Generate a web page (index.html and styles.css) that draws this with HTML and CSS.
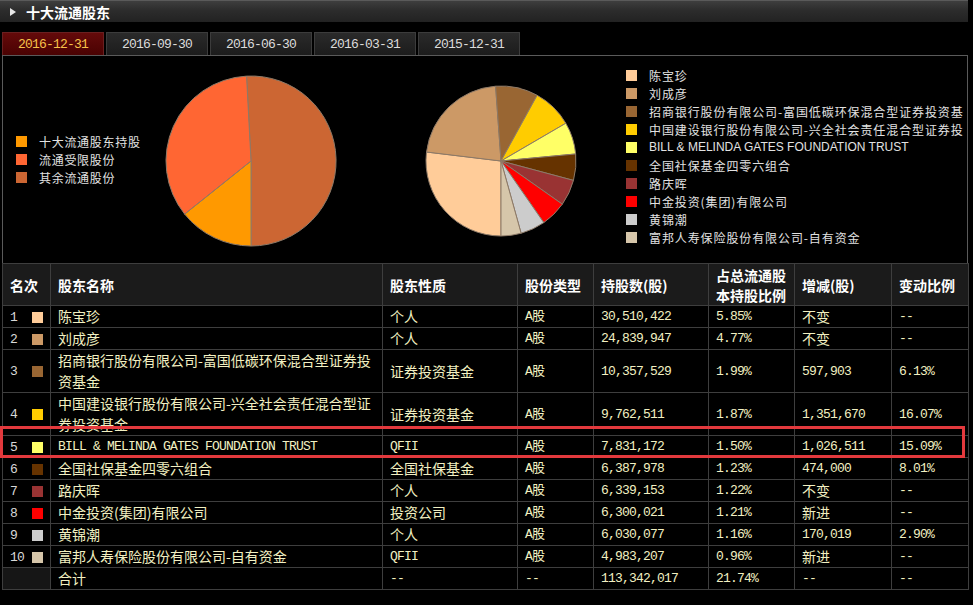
FILE: index.html
```html
<!DOCTYPE html>
<html lang="zh-CN">
<head>
<meta charset="utf-8">
<title>十大流通股东</title>
<link rel="stylesheet" href="styles.css">
</head>
<body>
<div class="page">
  <div class="titlebar"><span class="tri"></span><span class="title">十大流通股东</span></div>
  <div class="tabs">
    <div class="tab active">2016-12-31</div>
    <div class="tab">2016-09-30</div>
    <div class="tab">2016-06-30</div>
    <div class="tab">2016-03-31</div>
    <div class="tab">2015-12-31</div>
  </div>
  <div class="panel">
    <div class="charts">
      <div class="legend legend-main">
        <div class="lg"><i class="sw k1"></i>十大流通股东持股</div>
        <div class="lg"><i class="sw k2"></i>流通受限股份</div>
        <div class="lg"><i class="sw k3"></i>其余流通股份</div>
      </div>
      <svg class="pie1" width="172" height="172" viewBox="0 0 172 172">
        <g stroke="#8d7a68" stroke-width="1" stroke-linejoin="round">
          <path fill="#cc6633" d="M86,86 L81.55,1.12 A85,85 0 1 1 86,171 Z"/>
          <path fill="#ff9900" d="M86,86 L86,171 A85,85 0 0 1 19.63,139.11 Z"/>
          <path fill="#ff6633" d="M86,86 L19.63,139.11 A85,85 0 0 1 81.55,1.12 Z"/>
        </g>
      </svg>
      <svg class="pie2" width="152" height="152" viewBox="0 0 152 152">
        <g stroke="#8d7a68" stroke-width="1" stroke-linejoin="round">
          <path fill="#ffcc99" d="M76,76 L76,151 A75,75 0 0 1 1.54,67.03 Z"/>
          <path fill="#cc9966" d="M76,76 L1.54,67.03 A75,75 0 0 1 70.59,1.2 Z"/>
          <path fill="#996633" d="M76,76 L70.59,1.2 A75,75 0 0 1 112.14,10.28 Z"/>
          <path fill="#ffcc00" d="M76,76 L112.14,10.28 A75,75 0 0 1 140.81,38.25 Z"/>
          <path fill="#ffff66" d="M76,76 L140.81,38.25 A75,75 0 0 1 150.67,68.97 Z"/>
          <path fill="#663300" d="M76,76 L150.67,68.97 A75,75 0 0 1 148.45,95.4 Z"/>
          <path fill="#993333" d="M76,76 L148.45,95.4 A75,75 0 0 1 137.31,119.2 Z"/>
          <path fill="#ff0000" d="M76,76 L137.31,119.2 A75,75 0 0 1 118.77,137.61 Z"/>
          <path fill="#cccccc" d="M76,76 L118.77,137.61 A75,75 0 0 1 96.12,148.25 Z"/>
          <path fill="#d6c6aa" d="M76,76 L96.12,148.25 A75,75 0 0 1 76,151 Z"/>
        </g>
      </svg>
      <div class="legend legend-holders">
        <div class="lg"><i class="sw c1"></i>陈宝珍</div>
        <div class="lg"><i class="sw c2"></i>刘成彦</div>
        <div class="lg"><i class="sw c3"></i>招商银行股份有限公司-富国低碳环保混合型证券投资基金</div>
        <div class="lg"><i class="sw c4"></i>中国建设银行股份有限公司-兴全社会责任混合型证券投资基金</div>
        <div class="lg latin"><i class="sw c5"></i>BILL &amp; MELINDA GATES FOUNDATION TRUST</div>
        <div class="lg"><i class="sw c6"></i>全国社保基金四零六组合</div>
        <div class="lg"><i class="sw c7"></i>路庆晖</div>
        <div class="lg"><i class="sw c8"></i>中金投资(集团)有限公司</div>
        <div class="lg"><i class="sw c9"></i>黄锦潮</div>
        <div class="lg"><i class="sw c10"></i>富邦人寿保险股份有限公司-自有资金</div>
      </div>
    </div>
    <table class="holders">
      <colgroup>
        <col class="w-rank"><col class="w-name"><col class="w-kind"><col class="w-type">
        <col class="w-num"><col class="w-pct"><col class="w-chg"><col class="w-ratio">
      </colgroup>
      <thead>
        <tr>
          <th>名次</th><th>股东名称</th><th>股东性质</th><th>股份类型</th>
          <th>持股数(股)</th><th>占总流通股<br>本持股比例</th><th>增减(股)</th><th>变动比例</th>
        </tr>
      </thead>
      <tbody>
        <tr><td class="rank"><span class="rk">1</span><i class="sw c1"></i></td><td>陈宝珍</td><td>个人</td><td class="mono">A股</td><td class="mono">30,510,422</td><td class="mono">5.85%</td><td>不变</td><td class="mono">--</td></tr>
        <tr><td class="rank"><span class="rk">2</span><i class="sw c2"></i></td><td>刘成彦</td><td>个人</td><td class="mono">A股</td><td class="mono">24,839,947</td><td class="mono">4.77%</td><td>不变</td><td class="mono">--</td></tr>
        <tr><td class="rank"><span class="rk">3</span><i class="sw c3"></i></td><td class="two">招商银行股份有限公司-富国低碳环保混合型证券投<br>资基金</td><td>证券投资基金</td><td class="mono">A股</td><td class="mono">10,357,529</td><td class="mono">1.99%</td><td class="mono">597,903</td><td class="mono">6.13%</td></tr>
        <tr><td class="rank"><span class="rk">4</span><i class="sw c4"></i></td><td class="two">中国建设银行股份有限公司-兴全社会责任混合型证<br>券投资基金</td><td>证券投资基金</td><td class="mono">A股</td><td class="mono">9,762,511</td><td class="mono">1.87%</td><td class="mono">1,351,670</td><td class="mono">16.07%</td></tr>
        <tr><td class="rank"><span class="rk">5</span><i class="sw c5"></i></td><td class="mono">BILL &amp; MELINDA GATES FOUNDATION TRUST</td><td class="mono">QFII</td><td class="mono">A股</td><td class="mono">7,831,172</td><td class="mono">1.50%</td><td class="mono">1,026,511</td><td class="mono">15.09%</td></tr>
        <tr><td class="rank"><span class="rk">6</span><i class="sw c6"></i></td><td>全国社保基金四零六组合</td><td>全国社保基金</td><td class="mono">A股</td><td class="mono">6,387,978</td><td class="mono">1.23%</td><td class="mono">474,000</td><td class="mono">8.01%</td></tr>
        <tr><td class="rank"><span class="rk">7</span><i class="sw c7"></i></td><td>路庆晖</td><td>个人</td><td class="mono">A股</td><td class="mono">6,339,153</td><td class="mono">1.22%</td><td>不变</td><td class="mono">--</td></tr>
        <tr><td class="rank"><span class="rk">8</span><i class="sw c8"></i></td><td>中金投资(集团)有限公司</td><td>投资公司</td><td class="mono">A股</td><td class="mono">6,300,021</td><td class="mono">1.21%</td><td>新进</td><td class="mono">--</td></tr>
        <tr><td class="rank"><span class="rk">9</span><i class="sw c9"></i></td><td>黄锦潮</td><td>个人</td><td class="mono">A股</td><td class="mono">6,030,077</td><td class="mono">1.16%</td><td class="mono">170,019</td><td class="mono">2.90%</td></tr>
        <tr><td class="rank"><span class="rk">10</span><i class="sw c10"></i></td><td>富邦人寿保险股份有限公司-自有资金</td><td class="mono">QFII</td><td class="mono">A股</td><td class="mono">4,983,207</td><td class="mono">0.96%</td><td>新进</td><td class="mono">--</td></tr>
        <tr class="total"><td class="rank"></td><td>合计</td><td class="mono">--</td><td class="mono">--</td><td class="mono">113,342,017</td><td class="mono">21.74%</td><td class="mono">--</td><td class="mono">--</td></tr>
      </tbody>
    </table>
    <div class="highlight"></div>
  </div>
</div>
</body>
</html>
```
FILE: styles.css
```css
html, body {
  margin: 0;
  padding: 0;
  background: #000;
}
body {
  font-family: "Noto Sans CJK SC", "Liberation Sans", sans-serif;
  color: #e6e6e6;
}
.page {
  width: 973px;
}

/* title bar */
.titlebar {
  width: 968px;
  height: 22px;
  box-sizing: border-box;
  border-top: 1px solid #5a5a5a;
  background: linear-gradient(#3e3e3e, #2c2c2c 45%, #222 100%);
  display: flex;
  align-items: center;
}
.tri {
  width: 0;
  height: 0;
  border-left: 6px solid #e6e6e6;
  border-top: 4px solid transparent;
  border-bottom: 4px solid transparent;
  margin: 0 10px 0 10px;
}
.title {
  font-size: 14px;
  font-weight: bold;
  color: #fff;
  line-height: 20px;
}

/* tabs */
.tabs {
  display: flex;
  gap: 2px;
  margin: 10px 0 0 2px;
  height: 23px;
}
.tab {
  width: 102px;
  height: 23px;
  box-sizing: border-box;
  border: 1px solid #3c3c3c;
  border-bottom: none;
  background: linear-gradient(#2a2a2a, #1c1c1c);
  color: #dcdcdc;
  font-family: "Liberation Mono", monospace;
  font-size: 13px;
  letter-spacing: -0.8px;
  display: flex;
  align-items: center;
  justify-content: center;
}
.tab.active {
  background: linear-gradient(#640a0a, #4a0202);
  border-color: #6a2020;
  color: #f6c24a;
}

/* panel */
.panel {
  position: relative;
  margin-left: 2px;
  width: 966px;
}
.charts {
  height: 207px;
  border: 1px solid #5a5a5a;
  border-bottom: none;
  display: flex;
  align-items: flex-start;
}
.legend {
  font-size: 12px;
  color: #e2e2e2;
  letter-spacing: 0.9px;
}
.lg {
  display: flex;
  align-items: center;
  height: 18px;
  white-space: nowrap;
}
.lg.latin {
  font-family: "Liberation Sans", sans-serif;
  letter-spacing: 0;
}
.legend-main {
  width: 149px;
  margin: 76px 0 0 13px;
  flex: none;
  letter-spacing: 0.7px;
}
.legend-holders {
  flex: 1;
  min-width: 0;
  overflow: hidden;
  margin: 10px 3px 0 49px;
}
.legend .sw {
  margin-right: 12px;
}
.pie1 {
  flex: none;
  margin-top: 19px;
  display: block;
}
.pie2 {
  flex: none;
  margin: 29px 0 0 88px;
  display: block;
}

.sw {
  display: inline-block;
  width: 11px;
  height: 11px;
  flex: none;
}
.k1 { background: #ff9900; }
.k2 { background: #ff6633; }
.k3 { background: #cc6633; }
.c1 { background: #ffcc99; }
.c2 { background: #cc9966; }
.c3 { background: #996633; }
.c4 { background: #ffcc00; }
.c5 { background: #ffff66; }
.c6 { background: #663300; }
.c7 { background: #993333; }
.c8 { background: #ff0000; }
.c9 { background: #cccccc; }
.c10 { background: #d6c6aa; }

/* table */
.holders {
  width: 966px;
  border-collapse: collapse;
  table-layout: fixed;
  border: 1px solid #5a5a5a;
}
.w-rank { width: 48px; }
.w-name { width: 332px; }
.w-kind { width: 135px; }
.w-type { width: 76px; }
.w-num { width: 115px; }
.w-pct { width: 86px; }
.w-chg { width: 97px; }
.w-ratio { width: 77px; }

.holders th,
.holders td {
  border: 1px solid #3e3e3e;
  padding: 0 0 0 7px;
  text-align: left;
  vertical-align: middle;
  white-space: nowrap;
  overflow: hidden;
}
.holders th {
  height: 41px;
  background: #1b1b1b;
  color: #fff;
  font-size: 14px;
  font-weight: bold;
  line-height: 20px;
}
.holders td {
  height: 21px;
  line-height: 17px;
  font-size: 14px;
  color: #f2f0c2;
}
.holders td.two {
  line-height: 21px;
}
.holders td.mono {
  font-family: "Liberation Mono", "Noto Sans CJK SC", monospace;
  font-size: 13px;
  letter-spacing: -0.8px;
  line-height: 15px;
}
.holders td.rank {
  padding-left: 7px;
  line-height: 15px;
}
.rk {
  display: inline-block;
  width: 22px;
  font-family: "Liberation Mono", monospace;
  font-size: 13px;
  letter-spacing: -0.8px;
  color: #d8d8d8;
  vertical-align: middle;
}
.rank .sw {
  vertical-align: middle;
}
.total td.rank {
  background: #161616;
}

/* highlighted row */
.highlight {
  position: absolute;
  left: -2px;
  top: 371px;
  width: 965px;
  height: 32px;
  box-sizing: border-box;
  border: 3px solid #e3393d;
  pointer-events: none;
}
```
